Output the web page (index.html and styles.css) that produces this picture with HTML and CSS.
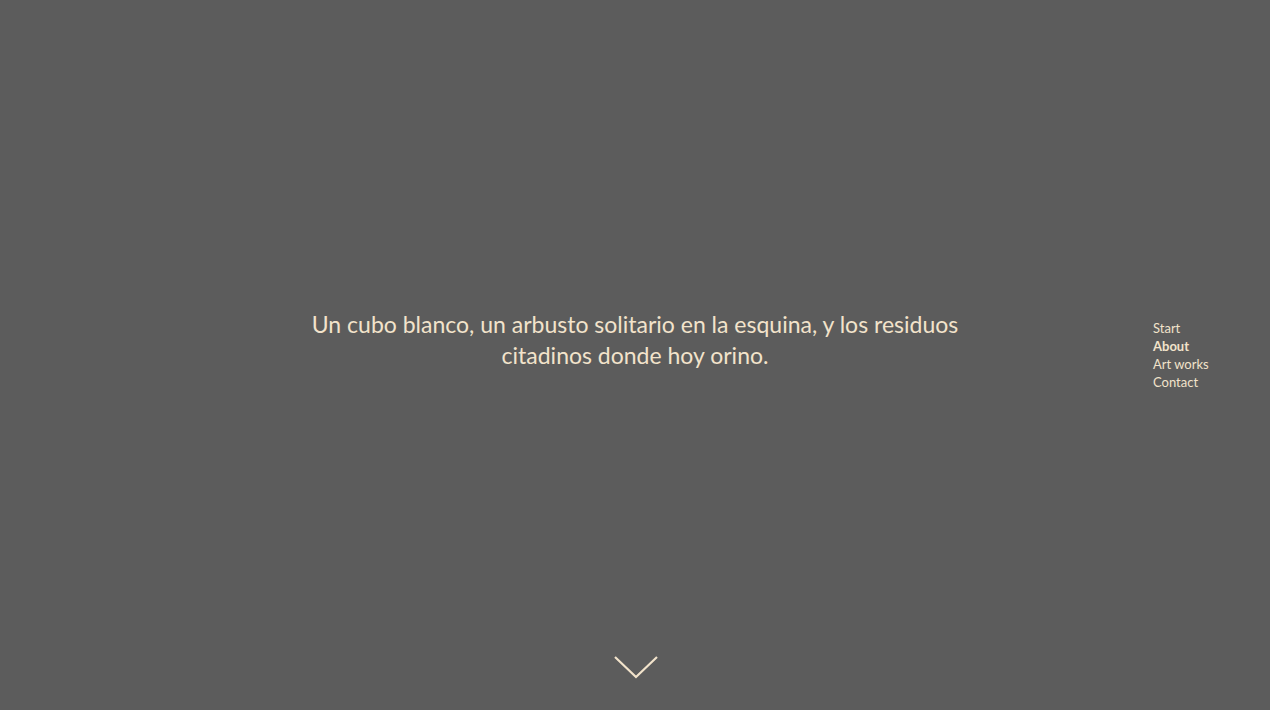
FILE: index.html
```html
<!DOCTYPE html>
<html lang="es">
<head>
<meta charset="utf-8">
<title>About</title>
<link rel="stylesheet" href="styles.css">
</head>
<body>
<main class="page">
  <section class="hero">
    <p class="quote">Un cubo blanco, un arbusto solitario en la esquina, y los residuos citadinos donde hoy orino.</p>
  </section>
  <nav class="side-nav">
    <a href="#" class="nav-link">Start</a>
    <a href="#" class="nav-link active">About</a>
    <a href="#" class="nav-link">Art works</a>
    <a href="#" class="nav-link">Contact</a>
  </nav>
  <a href="#" class="scroll-down" aria-label="Scroll down">
    <svg width="44" height="24" viewBox="0 0 44 24"><polyline points="1,2 22,22 43,2" fill="none" stroke="#f2e3cb" stroke-width="2.2"/></svg>
  </a>
</main>
</body>
</html>
```

FILE: styles.css
```css
html, body {
  margin: 0;
  padding: 0;
  height: 100%;
  background: #5c5c5c;
}
body {
  font-family: Lato, "Open Sans", sans-serif;
  color: #f2e3cb;
  overflow: hidden;
}
.page {
  position: relative;
  height: 710px;
  display: flex;
  justify-content: center;
  align-items: flex-start;
}
.hero {
  width: 680px;
  padding-top: 309px;
}
.quote {
  margin: 0;
  text-align: center;
  font-size: 23px;
  line-height: 31px;
}
.side-nav {
  position: absolute;
  left: 1153px;
  top: 319px;
  display: flex;
  flex-direction: column;
}
.nav-link {
  color: #f2e3cb;
  text-decoration: none;
  font-size: 13px;
  line-height: 18px;
}
.nav-link.active {
  font-weight: 700;
}
.scroll-down {
  position: absolute;
  left: 614px;
  top: 655px;
  display: block;
  line-height: 0;
}
```
